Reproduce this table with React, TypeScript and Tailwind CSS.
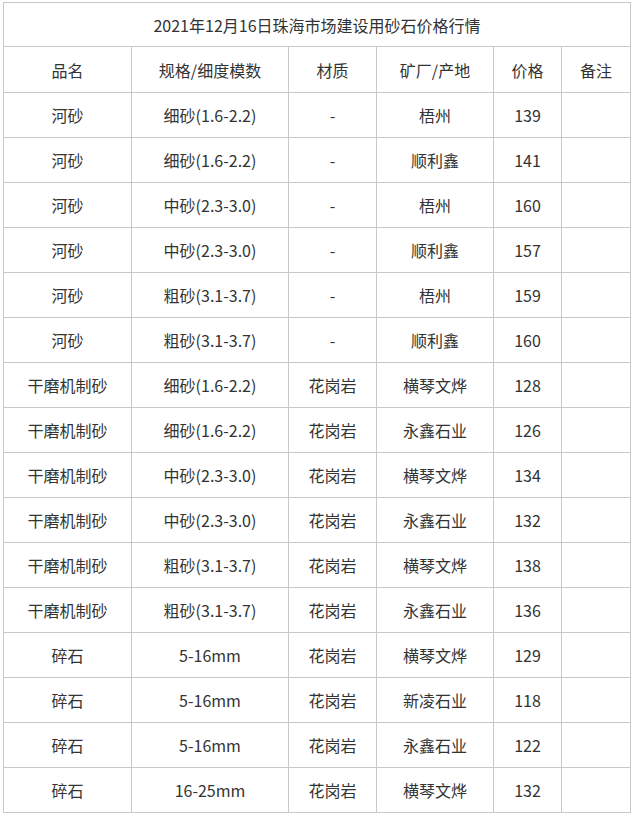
const rows: [string, string, string, string, string][] = [
  ['河砂', '细砂(1.6-2.2)', '-', '梧州', '139'],
  ['河砂', '细砂(1.6-2.2)', '-', '顺利鑫', '141'],
  ['河砂', '中砂(2.3-3.0)', '-', '梧州', '160'],
  ['河砂', '中砂(2.3-3.0)', '-', '顺利鑫', '157'],
  ['河砂', '粗砂(3.1-3.7)', '-', '梧州', '159'],
  ['河砂', '粗砂(3.1-3.7)', '-', '顺利鑫', '160'],
  ['干磨机制砂', '细砂(1.6-2.2)', '花岗岩', '横琴文烨', '128'],
  ['干磨机制砂', '细砂(1.6-2.2)', '花岗岩', '永鑫石业', '126'],
  ['干磨机制砂', '中砂(2.3-3.0)', '花岗岩', '横琴文烨', '134'],
  ['干磨机制砂', '中砂(2.3-3.0)', '花岗岩', '永鑫石业', '132'],
  ['干磨机制砂', '粗砂(3.1-3.7)', '花岗岩', '横琴文烨', '138'],
  ['干磨机制砂', '粗砂(3.1-3.7)', '花岗岩', '永鑫石业', '136'],
  ['碎石', '5-16mm', '花岗岩', '横琴文烨', '129'],
  ['碎石', '5-16mm', '花岗岩', '新凌石业', '118'],
  ['碎石', '5-16mm', '花岗岩', '永鑫石业', '122'],
  ['碎石', '16-25mm', '花岗岩', '横琴文烨', '132'],
];

const headers = ['品名', '规格/细度模数', '材质', '矿厂/产地', '价格', '备注'];

const cell = 'border border-[#c8c8c8] text-center align-middle p-0';

export default function App() {
  return (
    <div
      className="w-[633px] h-[814px] bg-white pl-[3px] pt-[2px] text-[#333] text-[16px] leading-none"
      style={{ fontFamily: '"Noto Sans CJK SC", "Noto Sans", sans-serif' }}
    >
      <table className="table-fixed border-collapse w-[627px]">
        <colgroup>
          <col className="w-[128px]" />
          <col className="w-[157px]" />
          <col className="w-[88px]" />
          <col className="w-[117px]" />
          <col className="w-[68px]" />
          <col className="w-[69px]" />
        </colgroup>
        <tbody>
          <tr className="h-[44px]">
            <td colSpan={6} className={cell}>
              2021年12月16日珠海市场建设用砂石价格行情
            </td>
          </tr>
          <tr className="h-[46px]">
            {headers.map((h) => (
              <td key={h} className={cell}>
                {h}
              </td>
            ))}
          </tr>
          {rows.map((r, i) => (
            <tr key={i} className="h-[45px]">
              {r.map((v, j) => (
                <td key={j} className={cell}>
                  {v}
                </td>
              ))}
              <td className={cell}></td>
            </tr>
          ))}
        </tbody>
      </table>
    </div>
  );
}
